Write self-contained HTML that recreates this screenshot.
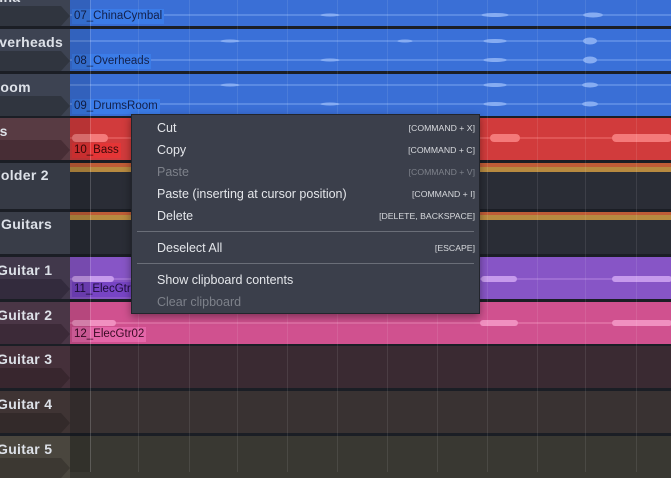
<!DOCTYPE html>
<html><head><meta charset="utf-8"><style>
*{margin:0;padding:0;box-sizing:border-box}
body{width:671px;height:472px;overflow:hidden;background:#1b1e25;position:relative;font-family:"Liberation Sans",sans-serif}
.tr{position:absolute;left:0;width:671px;height:42px;overflow:hidden}
.hd{position:absolute;left:0;top:0;width:70px;height:100%;overflow:hidden}
.hd .band{position:absolute;left:0;top:22px;width:70px;height:20px;clip-path:polygon(0 0,61px 0,70px 50%,61px 100%,0 100%)}
.hd span{position:absolute;top:5px;font-size:14px;font-weight:bold;color:#dde1e8;white-space:nowrap;letter-spacing:0.3px}
.ln{position:absolute;left:70px;top:0;right:0;height:100%}
.lbl{position:absolute;left:72px;bottom:2px;font-size:11.5px;padding:0 2px;height:15px;line-height:15px;white-space:nowrap}
svg{position:absolute;left:0;top:0}
.grid{position:absolute;top:0;width:1px;height:472px;background:rgba(255,255,255,0.09)}
.menu{position:absolute;left:131px;top:114px;width:349px;height:200px;background:#3b3f4b;border:1px solid #22252c;box-shadow:0 3px 8px rgba(0,0,0,.4)}
.it{position:absolute;left:25px;right:4px;height:20px;font-size:12.5px;color:#e4e6ea;line-height:20px}
.it b{position:absolute;right:0;top:0;font-weight:normal;font-size:8.7px;color:#d8dade}
.it.d,.it.d b{color:#7d818a}
.sep{position:absolute;left:5px;right:5px;height:1px;background:#6a6e78}
</style></head><body>

<div class="tr" style="top:-16px"><div class="hd" style="background:#3d4352"><div class="band" style="background:#30353f"></div><span style="left:-20px">China</span></div>
<div class="ln" style="background:#3a6fd6"></div>
<svg width="671" height="42"><line x1="70" y1="31" x2="671" y2="31" stroke="#7aa4f0" stroke-width="1"/><g fill="#86acf2"><ellipse cx="495" cy="31" rx="14" ry="2"/><ellipse cx="593" cy="31" rx="10" ry="2.5"/><ellipse cx="330" cy="31" rx="10" ry="1.5"/></g></svg>
<div class="lbl" style="background:#3b7ce8;color:#13204a">07_ChinaCymbal</div></div>

<div class="tr" style="top:29px"><div class="hd" style="background:#3d4352"><div class="band" style="background:#30353f"></div><span style="left:-12px">Overheads</span></div>
<div class="ln" style="background:#3a70d8"></div>
<svg width="671" height="42"><g stroke="#7aa4f0"><line x1="70" y1="12" x2="671" y2="12"/><line x1="70" y1="31" x2="671" y2="31"/></g><g fill="#86acf2"><ellipse cx="495" cy="12" rx="12" ry="2"/><ellipse cx="590" cy="12" rx="7" ry="3.5"/><ellipse cx="495" cy="31" rx="12" ry="2"/><ellipse cx="590" cy="31" rx="7" ry="3.5"/><ellipse cx="230" cy="12" rx="10" ry="1.5"/><ellipse cx="330" cy="31" rx="10" ry="1.5"/><ellipse cx="405" cy="12" rx="8" ry="1.5"/></g></svg>
<div class="lbl" style="background:#3b7ce8;color:#13204a">08_Overheads</div></div>

<div class="tr" style="top:74px"><div class="hd" style="background:#3d4352"><div class="band" style="background:#30353f"></div><span style="left:-10px">Room</span></div>
<div class="ln" style="background:#3a6fd6"></div>
<svg width="671" height="42"><g stroke="#7aa4f0"><line x1="70" y1="11" x2="671" y2="11"/><line x1="70" y1="30" x2="671" y2="30"/></g><g fill="#86acf2"><ellipse cx="495" cy="11" rx="12" ry="2"/><ellipse cx="590" cy="11" rx="8" ry="2.5"/><ellipse cx="495" cy="30" rx="12" ry="2"/><ellipse cx="590" cy="30" rx="8" ry="2.5"/><ellipse cx="230" cy="11" rx="10" ry="1.5"/><ellipse cx="330" cy="30" rx="10" ry="1.5"/></g></svg>
<div class="lbl" style="background:#3b7ce8;color:#13204a">09_DrumsRoom</div></div>

<div class="tr" style="top:118px"><div class="hd" style="background:#583b43"><div class="band" style="background:#472d35"></div><span style="left:-27px">Bass</span></div>
<div class="ln" style="background:#d13b3c"></div>
<svg width="671" height="42"><line x1="70" y1="20" x2="671" y2="20" stroke="#f07070"/><g fill="#f47a7a"><rect x="72" y="16" width="36" height="8" rx="4"/><rect x="490" y="16" width="30" height="8" rx="4"/><rect x="612" y="16" width="60" height="8" rx="4"/></g></svg>
<div class="lbl" style="background:#e43536;color:#3a0808">10_Bass</div></div>

<div class="tr" style="top:163px;height:46px"><div class="hd" style="background:#363a45"><span style="left:-8px;top:4px">Folder 2</span></div>
<div class="ln" style="background:#2a2d36"><div style="height:4px;background:#bf5c36"></div><div style="height:5px;background:#b78a40"></div></div></div>

<div class="tr" style="top:212px"><div class="hd" style="background:#393d48"><span style="left:1px;top:4px">Guitars</span></div>
<div class="ln" style="background:#2a2d36"><div style="height:3px;background:#bf5c36"></div><div style="height:5px;background:#b78a40"></div></div></div>

<div class="tr" style="top:257px"><div class="hd" style="background:#41384b"><div class="band" style="background:#332b3d"></div><span style="left:-3px">Guitar 1</span></div>
<div class="ln" style="background:#8755c6"></div>
<svg width="671" height="42"><line x1="70" y1="22" x2="671" y2="22" stroke="#b585e0"/><g fill="#c69aec"><rect x="72" y="19" width="42" height="6" rx="3"/><rect x="481" y="19" width="36" height="6" rx="3"/><rect x="612" y="19" width="60" height="6" rx="3"/></g></svg>
<div class="lbl" style="background:#7744c4;color:#1d0c3a">11_ElecGtr01</div></div>

<div class="tr" style="top:302px"><div class="hd" style="background:#4a3646"><div class="band" style="background:#3c2a38"></div><span style="left:-3px">Guitar 2</span></div>
<div class="ln" style="background:#d0518f"></div>
<svg width="671" height="42"><line x1="70" y1="21" x2="671" y2="21" stroke="#ec86b6"/><g fill="#f090c0"><rect x="72" y="18" width="44" height="6" rx="3"/><rect x="480" y="18" width="38" height="6" rx="3"/><rect x="612" y="18" width="60" height="6" rx="3"/></g></svg>
<div class="lbl" style="background:#e466a8;color:#3a0a24">12_ElecGtr02</div></div>

<div class="tr" style="top:346px"><div class="hd" style="background:#45303a"><div class="band" style="background:#38262e"></div><span style="left:-3px">Guitar 3</span></div>
<div class="ln" style="background:#3a2a32"></div></div>
<div class="tr" style="top:391px"><div class="hd" style="background:#3f3434"><div class="band" style="background:#332a2a"></div><span style="left:-3px">Guitar 4</span></div>
<div class="ln" style="background:#393232"></div></div>
<div class="tr" style="top:436px"><div class="hd" style="background:#4a463e"><div class="band" style="background:#3c3832"></div><span style="left:-3px">Guitar 5</span></div>
<div class="ln" style="background:#393832"></div></div>

<div style="position:absolute;left:70px;top:0;width:20px;height:472px;background:rgba(0,0,0,0.12)"></div>
<div class="grid" style="left:90px;background:rgba(255,255,255,0.18)"></div>
<div class="grid" style="left:138px"></div><div class="grid" style="left:189px"></div><div class="grid" style="left:237px"></div><div class="grid" style="left:287px"></div><div class="grid" style="left:337px"></div><div class="grid" style="left:387px"></div><div class="grid" style="left:437px"></div><div class="grid" style="left:487px"></div><div class="grid" style="left:537px"></div><div class="grid" style="left:585px"></div><div class="grid" style="left:636px"></div>

<div class="menu">
<div class="it" style="top:3px">Cut<b>[COMMAND + X]</b></div>
<div class="it" style="top:25px">Copy<b>[COMMAND + C]</b></div>
<div class="it d" style="top:47px">Paste<b>[COMMAND + V]</b></div>
<div class="it" style="top:69px">Paste (inserting at cursor position)<b>[COMMAND + I]</b></div>
<div class="it" style="top:91px">Delete<b>[DELETE, BACKSPACE]</b></div>
<div class="sep" style="top:116px"></div>
<div class="it" style="top:123px">Deselect All<b>[ESCAPE]</b></div>
<div class="sep" style="top:148px"></div>
<div class="it" style="top:155px">Show clipboard contents</div>
<div class="it d" style="top:177px">Clear clipboard</div>
</div>
</body></html>
